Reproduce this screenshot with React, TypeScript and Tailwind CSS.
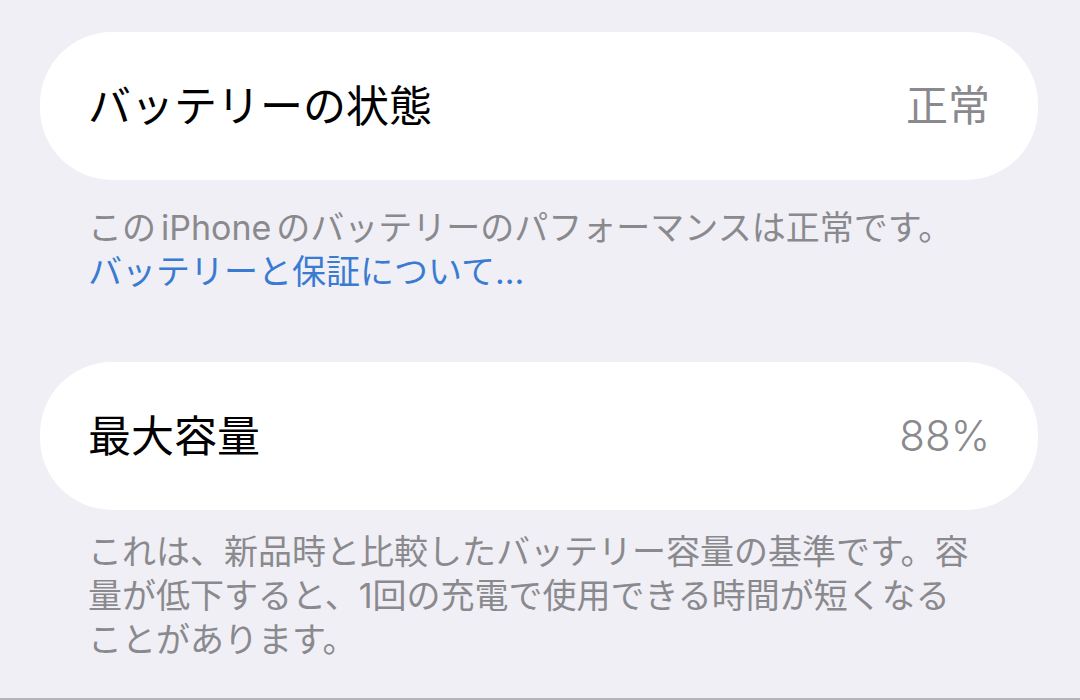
import React from 'react'

const font = { fontFamily: 'Inter, "Noto Sans CJK JP", sans-serif' }

type RowProps = {
    label: string
    value: string
    thin?: boolean
}

const Row = ({ label, value, thin }: RowProps) => (
    <div className="flex h-[148px] items-center justify-between rounded-[72px] bg-white px-12">
        <span className="text-[43px] leading-none text-black">{label}</span>
        <span className={`text-[42px] leading-none text-[#8a8a8e] ${thin ? 'font-light' : 'font-normal'}`}>{value}</span>
    </div>
)

const App = () => {
    return (
        <div
            style={font}
            className="h-[700px] w-[1080px] overflow-hidden border-b-2 border-[#b4b4b8] bg-[#f0eff5] pl-10 pr-[42px] pt-8"
        >
            <Row label="バッテリーの状態" value="正常" />
            <p className="mt-[26px] whitespace-nowrap px-12 text-[34px] leading-[44px] text-[#8a8a8e]">
                この<span className="mx-[5px]">iPhone</span>のバッテリーのパフォーマンスは正常です。
                <br />
                <span className="text-[#3a7bd2]">バッテリーと保証について...</span>
            </p>

            <div className="mt-[68px]">
                <Row label="最大容量" value="88%" thin />
            </div>
            <p className="mt-5 whitespace-nowrap px-12 text-[34px] leading-[44px] text-[#8a8a8e]">
                これは、新品時と比較したバッテリー容量の基準です。容
                <br />
                量が低下すると、1回の充電で使用できる時間が短くなる
                <br />
                ことがあります。
            </p>
        </div>
    )
}

export default App
